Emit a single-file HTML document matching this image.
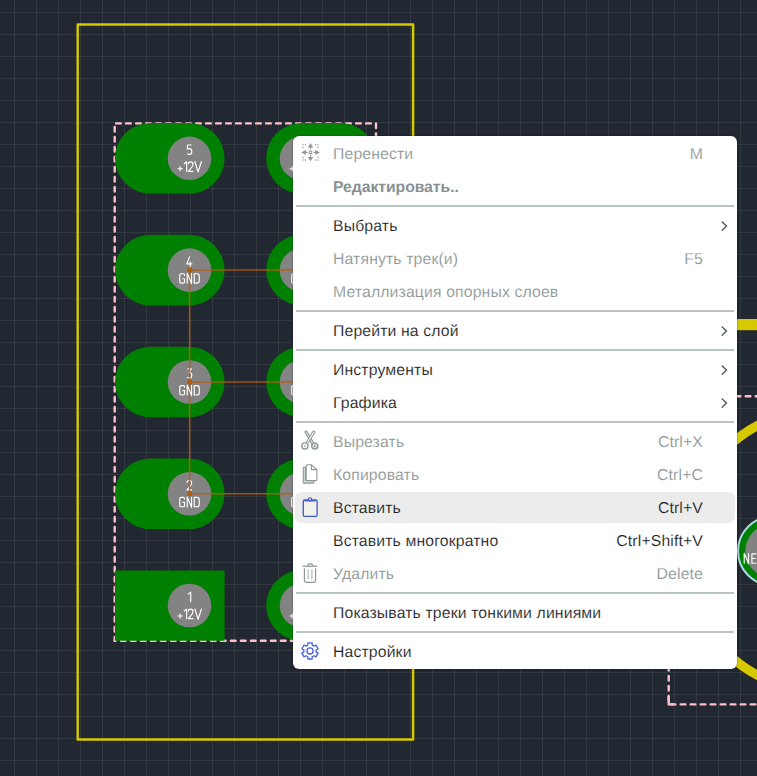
<!DOCTYPE html>
<html><head><meta charset="utf-8">
<style>
html,body{margin:0;padding:0;width:757px;height:776px;overflow:hidden;background:#222831;}
body{position:relative;font-family:"Liberation Sans",sans-serif;}
#grid{position:absolute;left:0;top:0;width:757px;height:776px;
 background-image:linear-gradient(to right,rgba(255,255,255,.075) 0,rgba(255,255,255,.075) 1px,transparent 1px),linear-gradient(to bottom,rgba(255,255,255,.075) 0,rgba(255,255,255,.075) 1px,transparent 1px);
 background-size:22px 22px;background-position:14px 0,0 12px;}
svg.board{position:absolute;left:0;top:0;}
#menu{text-rendering:geometricPrecision;-webkit-text-stroke:0.12px #fff;position:absolute;left:293px;top:136px;width:444px;height:533px;background:#fff;border-radius:6px;
 box-shadow:0 0 2px rgba(0,0,0,0.45);box-sizing:border-box;padding-top:1px;}
.row{position:relative;height:33px;}
.row .t{position:absolute;left:40px;top:1px;line-height:33px;font-size:15.75px;letter-spacing:0.15px;color:#1e1e1e;white-space:nowrap;}
.row.dis .t,.row.dis .k{color:#8c9696;}
.row .k{position:absolute;right:34px;top:1px;line-height:33px;font-size:15.75px;letter-spacing:0.15px;color:#1e1e1e;white-space:nowrap;}
.row.hl .t,.row.hl .k{-webkit-text-stroke-color:#ebeceb;}
.row.hl::before{content:"";position:absolute;left:2px;right:2px;top:0.6px;height:31.7px;background:#ebeceb;border-radius:6px;}
.sep{height:2px;margin:2px 3px;background:#b9c4c4;}

.ico{position:absolute;left:5px;top:3px;}
</style></head>
<body>
<div id="grid"></div>
<svg class="board" width="757" height="776" viewBox="0 0 757 776">
 <!-- yellow board outline -->
 <rect x="77.7" y="24.45" width="335.4" height="715" fill="none" stroke="#d6c900" stroke-width="2.45" stroke-linejoin="round"/>
 <!-- right side yellow band + circle -->
 <rect x="690" y="319" width="80" height="11.2" fill="#d6c900"/>
 <circle cx="824.9" cy="550.4" r="141.9" fill="none" stroke="#d6c900" stroke-width="9.2"/>
 <!-- dashed rect right -->
 <g stroke="#ffc0cb" stroke-width="2.4" stroke-dasharray="4.7 5.3" stroke-linecap="round" fill="none">
  <line x1="668.7" y1="396.3" x2="800" y2="396.3" stroke-dashoffset="3"/>
  <line x1="668.7" y1="396.3" x2="668.7" y2="704.4" stroke-dashoffset="0.4"/>
  <path d="M668.7 697 L668.7 704.4 L673 704.4" stroke-dasharray="none" stroke-linejoin="round"/>
  <line x1="668.7" y1="704.4" x2="800" y2="704.4" stroke-dashoffset="8"/>
 </g>
 <!-- dashed rect left -->
 <g stroke="#ffc0cb" stroke-width="2.4" stroke-dasharray="4.7 5.3" stroke-linecap="round" fill="none">
  <line x1="114.7" y1="123.4" x2="376" y2="123.4" stroke-dashoffset="8.6"/>
  <line x1="114.7" y1="123.4" x2="114.7" y2="640.7" stroke-dashoffset="6.5"/>
  <line x1="114.7" y1="640.7" x2="376" y2="640.7" stroke-dashoffset="3.8"/>
  <line x1="376" y1="123.4" x2="376" y2="640.7" stroke-dashoffset="0"/>
 </g>
 <!-- pads col 1 -->
 <g fill="#008000">
  <rect x="115" y="123.0" width="109.6" height="70.6" rx="35.3"/>
  <rect x="115" y="234.8" width="109.6" height="70.6" rx="35.3"/>
  <rect x="115" y="346.7" width="109.6" height="70.6" rx="35.3"/>
  <rect x="115" y="458.5" width="109.6" height="70.6" rx="35.3"/>
  <rect x="115" y="570.5" width="109.6" height="70.2"/>
 </g>
 <g fill="#008000">
  <rect x="266.2" y="123.0" width="109.6" height="70.6" rx="35.3"/>
  <rect x="266.2" y="234.8" width="109.6" height="70.6" rx="35.3"/>
  <rect x="266.2" y="346.7" width="109.6" height="70.6" rx="35.3"/>
  <rect x="266.2" y="458.5" width="109.6" height="70.6" rx="35.3"/>
  <rect x="266.2" y="570.3" width="109.6" height="70.6" rx="35.3"/>
 </g>
 <g fill="#838383">
  <circle cx="189.5" cy="158.3" r="21.8"/>
  <circle cx="189.5" cy="270.1" r="21.8"/>
  <circle cx="189.5" cy="382" r="21.8"/>
  <circle cx="189.5" cy="493.8" r="21.8"/>
  <circle cx="189.5" cy="605.5" r="21.8"/>
  <circle cx="301.5" cy="158.3" r="21.8"/>
  <circle cx="301.5" cy="270.1" r="21.8"/>
  <circle cx="301.5" cy="382" r="21.8"/>
  <circle cx="301.5" cy="493.8" r="21.8"/>
  <circle cx="301.5" cy="605.5" r="21.8"/>
 </g>
 <!-- NE pad -->
 <circle cx="772.3" cy="551" r="34.3" fill="#008000" stroke="#add8e6" stroke-width="2"/>
 <circle cx="772.3" cy="551" r="27" fill="#838383"/>
 <!-- nums -->
<g fill="none" stroke="#fff" stroke-width="1.15" stroke-linejoin="round">
<path transform="translate(186.55 144.40)" d="M5.0 0.6 L1.0 0.6 L0.8 4.7 Q1.8 4.2 2.9 4.2 Q5.2 4.2 5.2 6.9 L5.2 7.5 Q5.2 10.0 2.9 10.0 Q1.4 10.0 0.6 9.2"/>
<path transform="translate(296.57 144.40)" d="M0.2 2.7 L3.0 0.5 L3.0 10.6"/>
<path transform="translate(300.62 144.40)" d="M0.6 2.6 Q0.6 0.6 2.9 0.6 Q5.2 0.6 5.2 2.6 L5.2 8.0 Q5.2 10.0 2.9 10.0 Q0.6 10.0 0.6 8.0 Z"/>
<path transform="translate(186.35 256.20)" d="M3.4 0.2 L0.5 7.7 L6.0 7.7 M3.9 5.3 L3.9 10.6"/>
<path transform="translate(298.60 256.20)" d="M1.2 10.0 L4.3 5.4 Q5.2 4.2 5.2 3.0 Q5.2 0.6 2.9 0.6 Q0.6 0.6 0.6 3.1 Q0.6 5.6 2.9 5.6 Q3.9 5.6 4.5 5.0"/>
<path transform="translate(186.50 368.10)" d="M0.7 0.6 L5.0 0.6 L2.5 4.5 Q5.3 4.4 5.3 7.2 Q5.3 10.0 3.0 10.0 Q1.4 10.0 0.5 9.1"/>
<path transform="translate(298.60 368.10)" d="M2.9 4.9 Q0.8 4.9 0.8 2.7 Q0.8 0.6 2.9 0.6 Q5.0 0.6 5.0 2.7 Q5.0 4.9 2.9 4.9 Q0.6 4.9 0.6 7.4 Q0.6 10.0 2.9 10.0 Q5.2 10.0 5.2 7.4 Q5.2 4.9 2.9 4.9 Z"/>
<path transform="translate(186.35 479.90)" d="M0.6 2.9 Q0.7 0.6 3.0 0.6 Q5.3 0.6 5.3 2.9 Q5.3 4.3 4.2 5.7 L0.7 10.0 L5.7 10.0"/>
<path transform="translate(298.60 479.90)" d="M0.5 0.6 L5.2 0.6 L1.8 10.6"/>
<path transform="translate(187.70 591.70)" d="M0.2 2.7 L3.0 0.5 L3.0 10.6"/>
<path transform="translate(298.60 591.70)" d="M4.6 0.6 L1.5 5.2 Q0.6 6.4 0.6 7.6 Q0.6 10.0 2.9 10.0 Q5.2 10.0 5.2 7.5 Q5.2 5.0 2.9 5.0 Q1.9 5.0 1.3 5.6"/>
</g>
 <!-- traces -->
 <g stroke="rgba(188,90,8,0.82)" stroke-width="1.5" fill="none">
  <line x1="189.6" y1="270.1" x2="189.6" y2="493.8"/>
  <line x1="189.6" y1="270.1" x2="301.5" y2="270.1"/>
  <line x1="189.6" y1="382" x2="301.5" y2="382"/>
  <line x1="189.6" y1="493.8" x2="301.5" y2="493.8"/>
 </g>
 <g fill="rgba(185,90,0,0.9)">
  <rect x="187" y="267.8" width="5" height="4.6"/>
  <rect x="187" y="379.7" width="5" height="4.6"/>
  <rect x="187" y="491.5" width="5" height="4.6"/>
 </g>
 <!-- labs -->
<g fill="none" stroke="#fff" stroke-width="1.15" stroke-linejoin="round">
<path transform="translate(177.18 161.30)" d="M0.3 7.4 L5.7 7.4 M3.0 5.0 L3.0 9.8"/>
<path transform="translate(183.62 161.30)" d="M0.2 2.7 L3.0 0.5 L3.0 10.6"/>
<path transform="translate(187.68 161.30)" d="M0.6 2.9 Q0.7 0.6 3.0 0.6 Q5.3 0.6 5.3 2.9 Q5.3 4.3 4.2 5.7 L0.7 10.0 L5.7 10.0"/>
<path transform="translate(194.43 161.30)" d="M0.3 0 L3.7 10.6 L7.1 0"/>
<path transform="translate(289.18 161.30)" d="M0.3 7.4 L5.7 7.4 M3.0 5.0 L3.0 9.8"/>
<path transform="translate(295.62 161.30)" d="M0.2 2.7 L3.0 0.5 L3.0 10.6"/>
<path transform="translate(299.68 161.30)" d="M0.6 2.9 Q0.7 0.6 3.0 0.6 Q5.3 0.6 5.3 2.9 Q5.3 4.3 4.2 5.7 L0.7 10.0 L5.7 10.0"/>
<path transform="translate(306.43 161.30)" d="M0.3 0 L3.7 10.6 L7.1 0"/>
<path transform="translate(179.15 273.10)" d="M5.4 2.8 L5.4 2.0 Q5.4 0.6 4.0 0.6 L2.0 0.6 Q0.6 0.6 0.6 2.0 L0.6 8.6 Q0.6 10.0 2.0 10.0 L4.0 10.0 Q5.4 10.0 5.4 8.6 L5.4 5.6 L3.4 5.6"/>
<path transform="translate(186.65 273.10)" d="M0.6 10.6 L0.6 0 L4.9 10.6 L4.9 0"/>
<path transform="translate(193.65 273.10)" d="M0.6 0.6 L3.3 0.6 Q5.6 0.6 5.6 2.9 L5.6 7.7 Q5.6 10.0 3.3 10.0 L0.6 10.0 Z"/>
<path transform="translate(291.15 273.10)" d="M5.4 2.8 L5.4 2.0 Q5.4 0.6 4.0 0.6 L2.0 0.6 Q0.6 0.6 0.6 2.0 L0.6 8.6 Q0.6 10.0 2.0 10.0 L4.0 10.0 Q5.4 10.0 5.4 8.6 L5.4 5.6 L3.4 5.6"/>
<path transform="translate(298.65 273.10)" d="M0.6 10.6 L0.6 0 L4.9 10.6 L4.9 0"/>
<path transform="translate(305.65 273.10)" d="M0.6 0.6 L3.3 0.6 Q5.6 0.6 5.6 2.9 L5.6 7.7 Q5.6 10.0 3.3 10.0 L0.6 10.0 Z"/>
<path transform="translate(179.15 385.00)" d="M5.4 2.8 L5.4 2.0 Q5.4 0.6 4.0 0.6 L2.0 0.6 Q0.6 0.6 0.6 2.0 L0.6 8.6 Q0.6 10.0 2.0 10.0 L4.0 10.0 Q5.4 10.0 5.4 8.6 L5.4 5.6 L3.4 5.6"/>
<path transform="translate(186.65 385.00)" d="M0.6 10.6 L0.6 0 L4.9 10.6 L4.9 0"/>
<path transform="translate(193.65 385.00)" d="M0.6 0.6 L3.3 0.6 Q5.6 0.6 5.6 2.9 L5.6 7.7 Q5.6 10.0 3.3 10.0 L0.6 10.0 Z"/>
<path transform="translate(291.15 385.00)" d="M5.4 2.8 L5.4 2.0 Q5.4 0.6 4.0 0.6 L2.0 0.6 Q0.6 0.6 0.6 2.0 L0.6 8.6 Q0.6 10.0 2.0 10.0 L4.0 10.0 Q5.4 10.0 5.4 8.6 L5.4 5.6 L3.4 5.6"/>
<path transform="translate(298.65 385.00)" d="M0.6 10.6 L0.6 0 L4.9 10.6 L4.9 0"/>
<path transform="translate(305.65 385.00)" d="M0.6 0.6 L3.3 0.6 Q5.6 0.6 5.6 2.9 L5.6 7.7 Q5.6 10.0 3.3 10.0 L0.6 10.0 Z"/>
<path transform="translate(179.15 496.80)" d="M5.4 2.8 L5.4 2.0 Q5.4 0.6 4.0 0.6 L2.0 0.6 Q0.6 0.6 0.6 2.0 L0.6 8.6 Q0.6 10.0 2.0 10.0 L4.0 10.0 Q5.4 10.0 5.4 8.6 L5.4 5.6 L3.4 5.6"/>
<path transform="translate(186.65 496.80)" d="M0.6 10.6 L0.6 0 L4.9 10.6 L4.9 0"/>
<path transform="translate(193.65 496.80)" d="M0.6 0.6 L3.3 0.6 Q5.6 0.6 5.6 2.9 L5.6 7.7 Q5.6 10.0 3.3 10.0 L0.6 10.0 Z"/>
<path transform="translate(291.15 496.80)" d="M5.4 2.8 L5.4 2.0 Q5.4 0.6 4.0 0.6 L2.0 0.6 Q0.6 0.6 0.6 2.0 L0.6 8.6 Q0.6 10.0 2.0 10.0 L4.0 10.0 Q5.4 10.0 5.4 8.6 L5.4 5.6 L3.4 5.6"/>
<path transform="translate(298.65 496.80)" d="M0.6 10.6 L0.6 0 L4.9 10.6 L4.9 0"/>
<path transform="translate(305.65 496.80)" d="M0.6 0.6 L3.3 0.6 Q5.6 0.6 5.6 2.9 L5.6 7.7 Q5.6 10.0 3.3 10.0 L0.6 10.0 Z"/>
<path transform="translate(177.18 608.60)" d="M0.3 7.4 L5.7 7.4 M3.0 5.0 L3.0 9.8"/>
<path transform="translate(183.62 608.60)" d="M0.2 2.7 L3.0 0.5 L3.0 10.6"/>
<path transform="translate(187.68 608.60)" d="M0.6 2.9 Q0.7 0.6 3.0 0.6 Q5.3 0.6 5.3 2.9 Q5.3 4.3 4.2 5.7 L0.7 10.0 L5.7 10.0"/>
<path transform="translate(194.43 608.60)" d="M0.3 0 L3.7 10.6 L7.1 0"/>
<path transform="translate(289.18 608.60)" d="M0.3 7.4 L5.7 7.4 M3.0 5.0 L3.0 9.8"/>
<path transform="translate(295.62 608.60)" d="M0.2 2.7 L3.0 0.5 L3.0 10.6"/>
<path transform="translate(299.68 608.60)" d="M0.6 2.9 Q0.7 0.6 3.0 0.6 Q5.3 0.6 5.3 2.9 Q5.3 4.3 4.2 5.7 L0.7 10.0 L5.7 10.0"/>
<path transform="translate(306.43 608.60)" d="M0.3 0 L3.7 10.6 L7.1 0"/>
<path transform="translate(743.60 553.20)" d="M0.6 10.6 L0.6 0 L4.9 10.6 L4.9 0"/>
<path transform="translate(751.3 553.20)" d="M5.0 0.6 L0.6 0.6 L0.6 10.0 L5.0 10.0 M0.6 5.3 L4.4 5.3"/>
</g>
</svg>

<div id="menu">
 <div class="row dis"><svg class="ico" width="26" height="26" viewBox="0 0 26 26"><g fill="#8e9999">
<path d="M12.5 3 L15.3 7.4 L9.7 7.4 Z"/><rect x="11.9" y="7" width="1.2" height="2"/>
<path d="M12.5 21.2 L15.3 17 L9.7 17 Z"/><rect x="11.9" y="15.4" width="1.2" height="2"/>
<path d="M3.4 12.4 L7.9 9.7 L7.9 15.1 Z"/><rect x="7.5" y="11.8" width="2" height="1.2"/>
<path d="M21.8 12.4 L17.3 9.7 L17.3 15.1 Z"/><rect x="15.7" y="11.8" width="2" height="1.2"/>
<rect x="4.4" y="4.2" width="1.2" height="1.2"/><rect x="6.8" y="4.2" width="1.2" height="1.2"/><rect x="4.4" y="6.8" width="1.2" height="1.2"/>
<rect x="19.4" y="4.2" width="1.2" height="1.2"/><rect x="17" y="4.2" width="1.2" height="1.2"/><rect x="19.4" y="6.8" width="1.2" height="1.2"/>
<rect x="4.4" y="19.4" width="1.2" height="1.2"/><rect x="6.8" y="19.4" width="1.2" height="1.2"/><rect x="4.4" y="16.8" width="1.2" height="1.2"/>
<rect x="19.4" y="19.4" width="1.2" height="1.2"/><rect x="17" y="19.4" width="1.2" height="1.2"/><rect x="19.4" y="16.8" width="1.2" height="1.2"/>
</g><rect x="11.2" y="11" width="2.6" height="2.6" fill="none" stroke="#8e9999" stroke-width="1"/></svg><span class="t">Перенести</span><span class="k">M</span></div>
 <div class="row dis"><span class="t" style="font-weight:bold;letter-spacing:-0.05px;-webkit-text-stroke:0;color:#879191">Редактировать..</span></div>
 <div class="sep"></div>
 <div class="row"><span class="t">Выбрать</span><svg class="chev" width="12" height="33" viewBox="0 0 12 33" style="position:absolute;left:425px;top:0"><path d="M4.2 12.9 L8.5 17.1 L4.2 21.3" fill="none" stroke="#4d5757" stroke-width="1.35" stroke-linecap="round" stroke-linejoin="round"/></svg></div>
 <div class="row dis"><span class="t">Натянуть трек(и)</span><span class="k">F5</span></div>
 <div class="row dis"><span class="t">Металлизация опорных слоев</span></div>
 <div class="sep"></div>
 <div class="row"><span class="t">Перейти на слой</span><svg class="chev" width="12" height="33" viewBox="0 0 12 33" style="position:absolute;left:425px;top:0"><path d="M4.2 12.9 L8.5 17.1 L4.2 21.3" fill="none" stroke="#4d5757" stroke-width="1.35" stroke-linecap="round" stroke-linejoin="round"/></svg></div>
 <div class="sep"></div>
 <div class="row"><span class="t">Инструменты</span><svg class="chev" width="12" height="33" viewBox="0 0 12 33" style="position:absolute;left:425px;top:0"><path d="M4.2 12.9 L8.5 17.1 L4.2 21.3" fill="none" stroke="#4d5757" stroke-width="1.35" stroke-linecap="round" stroke-linejoin="round"/></svg></div>
 <div class="row"><span class="t">Графика</span><svg class="chev" width="12" height="33" viewBox="0 0 12 33" style="position:absolute;left:425px;top:0"><path d="M4.2 12.9 L8.5 17.1 L4.2 21.3" fill="none" stroke="#4d5757" stroke-width="1.35" stroke-linecap="round" stroke-linejoin="round"/></svg></div>
 <div class="sep"></div>
 <div class="row dis"><svg class="ico" width="26" height="26" viewBox="0 0 26 26"><g stroke-linecap="round">
<line x1="8" y1="4.2" x2="14.6" y2="15" stroke="#8e9999" stroke-width="3.2"/>
<line x1="8" y1="4.2" x2="14.6" y2="15" stroke="#d3d9d9" stroke-width="1.2"/>
<line x1="15.8" y1="4.2" x2="9" y2="15" stroke="#8e9999" stroke-width="3.2"/>
<line x1="15.8" y1="4.2" x2="9" y2="15" stroke="#fff" stroke-width="1.2"/>
</g>
<circle cx="6.9" cy="17.9" r="3.1" fill="#fff" stroke="#8e9999" stroke-width="1.3"/>
<circle cx="16.8" cy="17.9" r="3.1" fill="#d3d9d9" stroke="#8e9999" stroke-width="1.3"/>
<rect x="6.2" y="17.2" width="1.4" height="1.4" fill="#8e9999"/><rect x="16.1" y="17.2" width="1.4" height="1.4" fill="#8e9999"/></svg><span class="t">Вырезать</span><span class="k">Ctrl+X</span></div>
 <div class="row dis"><svg class="ico" width="26" height="26" viewBox="0 0 26 26">
<path d="M5.3 7 Q5.3 6.3 6 6.3 L7.6 6.3 L7.6 19.3 L16 19.3 L16 21.4 Q16 22.1 15.3 22.1 L6 22.1 Q5.3 22.1 5.3 21.4 Z" fill="#d3d9d9" stroke="#8e9999" stroke-width="1.1" stroke-linejoin="round"/>
<path d="M8.2 4.8 Q8.2 3.8 9.2 3.8 L13.6 3.8 L18.9 9 L18.9 18.6 Q18.9 19.6 17.9 19.6 L9.2 19.6 Q8.2 19.6 8.2 18.6 Z" fill="#fff" stroke="#8e9999" stroke-width="1.1" stroke-linejoin="round"/>
<path d="M13.4 3.9 L13.4 8.6 L18.8 8.6" fill="none" stroke="#8e9999" stroke-width="1.1" stroke-linejoin="round"/></svg><span class="t">Копировать</span><span class="k">Ctrl+C</span></div>
 <div class="row hl"><svg class="ico" width="26" height="26" viewBox="0 0 26 26">
<rect x="5.3" y="6" width="13.8" height="16.3" rx="1.4" fill="#f1f1ec" stroke="#4156cc" stroke-width="1.3"/>
<path d="M6 6.2 L18.4 6.2 L17 7.6 L7.4 7.6 Z" fill="#4156cc"/>
<circle cx="12" cy="5.3" r="1.55" fill="#f1f1ec" stroke="#4156cc" stroke-width="1.2"/></svg><span class="t">Вставить</span><span class="k">Ctrl+V</span></div>
 <div class="row"><span class="t">Вставить многократно</span><span class="k">Ctrl+Shift+V</span></div>
 <div class="row dis"><svg class="ico" width="26" height="26" viewBox="0 0 26 26" fill="none" stroke="#8e9999">
<line x1="4.6" y1="6.2" x2="19.2" y2="6.2" stroke-width="1.3"/>
<path d="M9.6 6 L10.4 3.9 L13.9 3.9 L14.7 6" stroke-width="1.1"/>
<path d="M6.4 8.3 L6.4 20.2 Q6.4 22.3 8.5 22.3 L15.6 22.3 Q17.6 22.3 17.6 20.2 L17.6 8.3" stroke-width="1.2"/>
<line x1="10.1" y1="9.6" x2="10.1" y2="19.6" stroke-width="1.1" stroke="#a9b2b2"/>
<line x1="13.9" y1="9.6" x2="13.9" y2="19.6" stroke-width="1.1" stroke="#a9b2b2"/></svg><span class="t">Удалить</span><span class="k">Delete</span></div>
 <div class="sep"></div>
 <div class="row"><span class="t">Показывать треки тонкими линиями</span></div>
 <div class="sep"></div>
 <div class="row"><svg class="ico" width="26" height="26" viewBox="0 0 26 26" fill="none" stroke="#4a60d4" stroke-width="1.3" stroke-linejoin="round">
<path d="M9.78 7.11 L9.83 4.79 L14.17 4.79 L14.22 7.11 L15.90 8.08 L17.94 6.96 L20.11 10.73 L18.12 11.93 L18.12 13.87 L20.11 15.07 L17.94 18.84 L15.90 17.72 L14.22 18.69 L14.17 21.01 L9.83 21.01 L9.78 18.69 L8.10 17.72 L6.06 18.84 L3.89 15.07 L5.88 13.87 L5.88 11.93 L3.89 10.73 L6.06 6.96 L8.10 8.08 Z"/>
<circle cx="12" cy="12.9" r="3.1"/></svg><span class="t">Настройки</span></div>
</div>
</body></html>
